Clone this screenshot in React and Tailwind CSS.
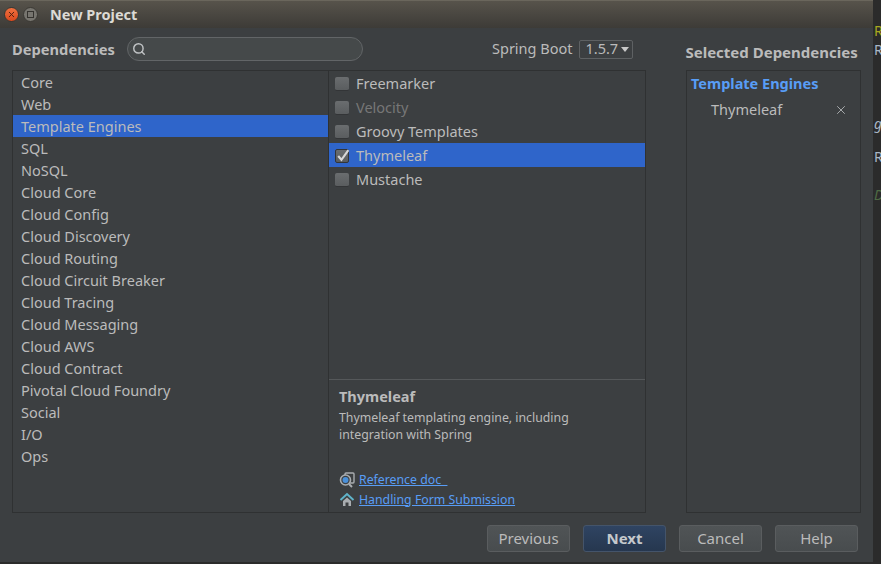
import { Search, X } from 'lucide-react'

const categories = ['Core', 'Web', 'Template Engines', 'SQL', 'NoSQL', 'Cloud Core', 'Cloud Config', 'Cloud Discovery', 'Cloud Routing', 'Cloud Circuit Breaker', 'Cloud Tracing', 'Cloud Messaging', 'Cloud AWS', 'Cloud Contract', 'Pivotal Cloud Foundry', 'Social', 'I/O', 'Ops']

const deps = [
  { name: 'Freemarker' },
  { name: 'Velocity', disabled: true },
  { name: 'Groovy Templates' },
  { name: 'Thymeleaf', checked: true },
  { name: 'Mustache' },
]

function Checkbox({ checked }) {
  return (
    <span className={`relative w-[14px] h-[14px] shrink-0 rounded-[2px] bg-gradient-to-b from-[#6a6d6f] to-[#5a5d5f] border-b border-[#333537] ${checked ? 'border border-[#2e3032]' : ''}`}>
      {checked && (
        <svg viewBox="0 0 14 14" className="absolute -left-[1px] -top-[2px] w-[15px] h-[15px]">
          <path d="M3 7.5 L6 11 L12.5 2" fill="none" stroke="#d8d8d8" strokeWidth="2" />
        </svg>
      )}
    </span>
  )
}

function Btn({ label, primary }) {
  return (
    <button className={`w-[83px] h-[27px] rounded-[3px] border text-[15px] ${primary ? 'border-[#44546a] bg-gradient-to-b from-[#2f4462] to-[#26374f] font-bold text-[#c5c9cc]' : 'border-[#5a5d5f] bg-gradient-to-b from-[#505456] to-[#484c4e] text-[#bbbbbb]'}`}>
      {label}
    </button>
  )
}

function DocIcon() {
  return (
    <svg viewBox="0 0 16 16" className="w-[16px] h-[16px] shrink-0">
      <rect x="6" y="1" width="9" height="10" rx="1" fill="#3c3f41" stroke="#a9adb0" strokeWidth="1.4" />
      <circle cx="6.5" cy="8" r="5" fill="#3c3f41" stroke="#a9adb0" strokeWidth="1.6" />
      <circle cx="6.5" cy="8" r="3" fill="#4a90d9" />
      <path d="M10 12 L13 15" stroke="#a9adb0" strokeWidth="2" />
    </svg>
  )
}

function HomeIcon() {
  return (
    <svg viewBox="0 0 16 16" className="w-[16px] h-[16px] shrink-0">
      <path d="M1.5 8 L8 2 L14.5 8" fill="none" stroke="#5fb3c9" strokeWidth="2" />
      <path d="M4 9 L8 5.5 L12 9 V14 H9.5 V10.5 H6.5 V14 H4 Z" fill="#a9adb0" />
    </svg>
  )
}

export default function App() {
  return (
    <div className="w-[881px] h-[564px] flex overflow-hidden bg-[#2b2b2b] text-[#bbbbbb] text-[14.5px] font-['Noto_Sans',sans-serif]">
      <div className="w-[873px] h-[562px] flex flex-col bg-[#3c3f41] shrink-0">
        {/* Title bar */}
        <div className="h-[28px] shrink-0 flex items-center gap-[4px] pl-[4px] bg-gradient-to-b from-[#57534b] to-[#3d3b37] border-t border-[#6a665c]">
          <span className="w-[15px] h-[15px] rounded-full border border-[#3a3833] bg-gradient-to-b from-[#f0703f] to-[#d9481c] flex items-center justify-center">
            <X size={9} strokeWidth={2.5} className="text-[#4a2010]" />
          </span>
          <span className="w-[15px] h-[15px] rounded-full border border-[#3a3833] bg-[#77756f] flex items-center justify-center">
            <span className="w-[7px] h-[7px] border border-[#35332f]"></span>
          </span>
          <span className="ml-[8px] text-[14.5px] font-bold text-[#dcdad5]">New Project</span>
        </div>

        {/* Toolbar + headers */}
        <div className="h-[42px] shrink-0 flex items-center pl-[12px]">
          <span className="w-[115px] font-bold text-[14.7px]">Dependencies</span>
          <div className="w-[236px] h-[24px] rounded-full border border-[#626567] bg-[#45494a] flex items-center pl-[4px]">
            <Search size={14} strokeWidth={2.5} className="text-[#c0c3c5]" />
          </div>
          <span className="ml-[129px]">Spring Boot</span>
          <span className="ml-[7px] w-[54px] h-[19px] rounded-[2px] border border-[#5e6163] flex items-center pl-[5px] gap-[3px]">
            1.5.7
            <span className="w-0 h-0 border-l-[4px] border-r-[4px] border-t-[5px] border-l-transparent border-r-transparent border-t-[#c8c8c8]"></span>
          </span>
          <span className="ml-[52px] mt-[7px] font-bold text-[15px] whitespace-nowrap">Selected Dependencies</span>
        </div>

        {/* Panels */}
        <div className="h-[443px] shrink-0 flex pl-[12px]">
          <div className="w-[634px] flex border border-[#2f3132]">
            <div className="w-[316px] shrink-0 border-r border-[#2f3132]">
              {categories.map((c) => (
                <div key={c} className={`h-[22px] pl-[8px] pt-[2px] flex items-center ${c === 'Template Engines' ? 'bg-[#2f65ca]' : ''}`}>
                  {c}
                </div>
              ))}
            </div>
            <div className="flex-1 flex flex-col">
              <div className="flex-1">
                {deps.map((d) => (
                  <div key={d.name} className={`h-[24px] pl-[6px] pt-[2px] flex items-center gap-[7px] ${d.checked ? 'bg-[#2f65ca]' : ''} ${d.disabled ? 'text-[#777777]' : ''}`}>
                    <Checkbox checked={d.checked} />
                    {d.name}
                  </div>
                ))}
              </div>
              <div className="h-[133px] shrink-0 border-t border-[#55585a] pl-[10px] pt-[6px]">
                <div className="font-bold h-[22px] flex items-center">Thymeleaf</div>
                <div className="mt-[1px] text-[12.3px] leading-[17px]">
                  Thymeleaf templating engine, including<br />integration with Spring
                </div>
                <div className="mt-[27px] flex items-center h-[20px] gap-[4px] text-[12.3px]">
                  <DocIcon />
                  <span className="text-[#589df6] underline whitespace-pre">Reference doc  </span>
                </div>
                <div className="flex items-center h-[20px] gap-[4px] text-[12.3px]">
                  <HomeIcon />
                  <span className="text-[#589df6] underline">Handling Form Submission</span>
                </div>
              </div>
            </div>
          </div>
          <div className="ml-[40px] w-[175px] border border-[#2f3132] pt-[1px]">
            <div className="h-[24px] pl-[4px] flex items-center font-bold text-[#589df6]">Template Engines</div>
            <div className="h-[28px] pl-[24px] pr-[12px] flex items-center justify-between">
              Thymeleaf
              <X size={14} strokeWidth={1.5} className="text-[#b5b8ba]" />
            </div>
          </div>
        </div>

        {/* Buttons */}
        <div className="mt-[12px] flex pl-[487px] gap-[13px]">
          <Btn label="Previous" />
          <Btn label="Next" primary />
          <Btn label="Cancel" />
          <Btn label="Help" />
        </div>
      </div>

      {/* Editor behind the dialog */}
      <div className="flex-1 flex flex-col overflow-hidden pl-[1px] pt-[22px] text-[14px] leading-[18px]">
        <span className="text-[#a8a820]">R</span>
        <span className="mt-[1px] text-[#a9b7c6]">R</span>
        <span className="mt-[56px] italic text-[#a9b7c6]">g</span>
        <span className="mt-[15px] text-[#a9b7c6]">R</span>
        <span className="mt-[20px] italic text-[#4f6b45]">De</span>
      </div>
    </div>
  )
}
